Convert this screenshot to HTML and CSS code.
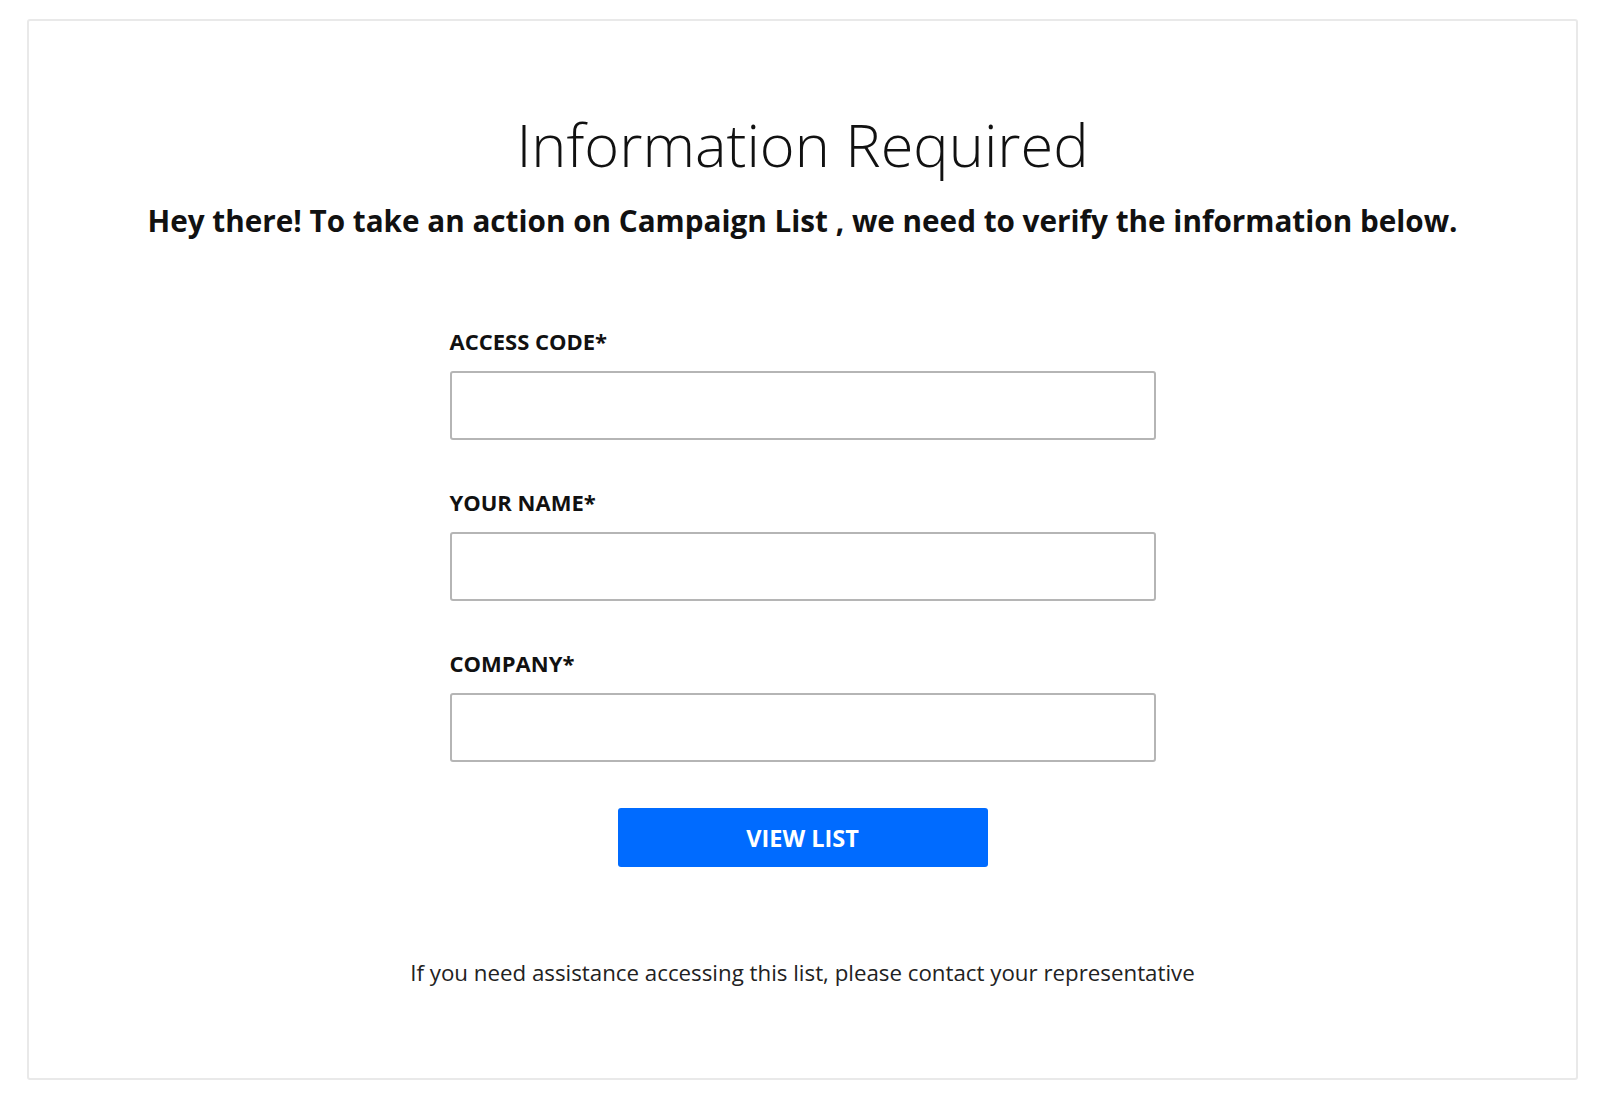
FILE: index.html
```html
<!DOCTYPE html>
<html lang="en">
<head>
<meta charset="UTF-8" />
<meta name="viewport" content="width=device-width, initial-scale=1" />
<title>Information Required</title>
<link rel="stylesheet" href="styles.css">
</head>
<body>

<div class="card">
  <h1 class="title">Information Required</h1>
  <p class="intro">Hey there! To take an action on Campaign List , we need to verify the information below.</p>

  <form class="verify-form" onsubmit="return false;">
    <label for="accessCode">ACCESS CODE*</label>
    <input type="text" id="accessCode" />

    <label for="yourName">YOUR NAME*</label>
    <input type="text" id="yourName" />

    <label for="company">COMPANY*</label>
    <input type="text" id="company" />

    <button type="submit">VIEW LIST</button>
  </form>

  <p class="help">If you need assistance accessing this list, please contact your representative</p>
</div>

</body>
</html>
```

FILE: styles.css
```css
* {
  box-sizing: border-box;
}
body {
  margin: 0;
  padding: 19px 22px 20px 27px;
  font-family: 'Open Sans', 'Noto Sans', sans-serif;
  background: #fff;
  color: #111;
}
.card {
  height: 1061px;
  border: 2px solid #e9e9e9;
  border-radius: 3px;
  padding: 88px 40px 0;
  display: flex;
  flex-direction: column;
  align-items: center;
}
.title {
  margin: 0;
  font-size: 59.5px;
  font-weight: 300;
  line-height: 70px;
  color: #111;
}
.intro {
  margin: 22px 0 0;
  font-size: 29.7px;
  font-weight: 700;
  line-height: 40px;
}
.verify-form {
  width: 706px;
  margin-top: 86px;
  display: flex;
  flex-direction: column;
}
label {
  font-size: 22px;
  font-weight: 700;
  line-height: 28px;
  margin-bottom: 16px;
}
input {
  height: 69px;
  border: 2px solid #b5b5b5;
  border-radius: 3px;
  margin-bottom: 48px;
  font-size: 20px;
  padding: 0 14px;
  font-family: inherit;
  outline: none;
}
input:last-of-type {
  margin-bottom: 46px;
}
button {
  align-self: center;
  width: 370px;
  height: 59px;
  background: #006bff;
  color: #fff;
  border: none;
  border-radius: 3px;
  font-family: inherit;
  font-size: 23.5px;
  font-weight: 700;
  cursor: pointer;
}
.help {
  margin: 92px 0 0;
  font-size: 22.3px;
  line-height: 28px;
  color: #222;
}
```
